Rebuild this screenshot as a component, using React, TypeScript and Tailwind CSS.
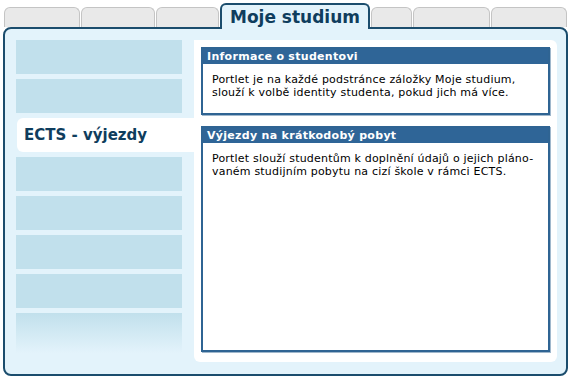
const font = { fontFamily: '"DejaVu Sans", Verdana, sans-serif' };

function Tab({ w }: { w: string }) {
  return (
    <div
      className={`${w} h-[20px] rounded-t-[6px] border border-b-0 border-[#c4c4c4] bg-[#e9e9e9]`}
    />
  );
}

function Portlet({ title, text, grow }: { title: string; text: string[]; grow?: boolean }) {
  return (
    <div
      className={`flex flex-col border-2 border-[#2f6493] bg-white shadow-[1px_1px_0_#9fb7cc] ${grow ? "flex-1" : "h-[68px]"}`}
    >
      <div className="h-[15px] bg-[#2f6597] px-[4px] text-[11px] font-bold leading-[15px] tracking-[0.3px] text-white">
        {title}
      </div>
      <div className="px-[9px] pt-[9px] text-[11px] leading-[13px] tracking-[0.2px] text-black">
        {text.map((t) => (
          <div key={t}>{t}</div>
        ))}
      </div>
    </div>
  );
}

export default function App() {
  return (
    <div className="h-[380px] w-[571px] bg-white" style={font}>
      {/* tabs */}
      <div className="relative z-10 flex h-[27px] items-end gap-[1px] pl-[4px] pr-[4px]">
        <Tab w="w-[76px]" />
        <Tab w="w-[74px]" />
        <Tab w="w-[63px]" />
        <div className="-mb-[2px] flex h-[26px] w-[150px] items-center justify-center rounded-t-[6px] border-2 border-b-0 border-[#1b4d6d] bg-[#e3f3fb] pt-[1px] text-[17px] font-bold text-[#0f3d5d]">
          Moje studium
        </div>
        <Tab w="w-[41px]" />
        <Tab w="w-[77px]" />
        <Tab w="w-[76px]" />
      </div>

      {/* panel */}
      <div className="mx-[3px] flex h-[349px] rounded-[8px] border-2 border-[#1b4d6d] bg-[#e3f3fb] pb-[12px] pl-[11px] pr-[9px] pt-[11px]">
        {/* sidebar */}
        <div className="flex w-[166px] flex-col gap-[5px]">
          <div className="h-[34px] bg-[#c1e0ec]" />
          <div className="h-[34px] bg-[#c1e0ec]" />
          <div className="-mr-[12px] ml-[1px] flex h-[34px] items-center rounded-l-[6px] bg-white pl-[7px] text-[15px] font-bold text-[#0f3d5d]">
            ECTS - výjezdy
          </div>
          <div className="h-[34px] bg-[#c1e0ec]" />
          <div className="h-[34px] bg-[#c1e0ec]" />
          <div className="h-[34px] bg-[#c1e0ec]" />
          <div className="h-[34px] bg-[#c1e0ec]" />
          <div className="h-[40px] bg-gradient-to-b from-[#c1e0ec] to-[#e3f3fb]" />
        </div>

        {/* content */}
        <div className="ml-[12px] flex flex-1 flex-col gap-[11px] rounded-[6px] rounded-tl-none bg-white p-[7px] pb-[10px]">
          <Portlet
            title="Informace o studentovi"
            text={[
              "Portlet je na každé podstránce záložky Moje studium,",
              "slouží k volbě identity studenta, pokud jich má více.",
            ]}
          />
          <Portlet
            title="Výjezdy na krátkodobý pobyt"
            text={[
              "Portlet slouží studentům k doplnění údajů o jejich pláno-",
              "vaném studijním pobytu na cizí škole v rámci ECTS.",
            ]}
            grow
          />
        </div>
      </div>
    </div>
  );
}
